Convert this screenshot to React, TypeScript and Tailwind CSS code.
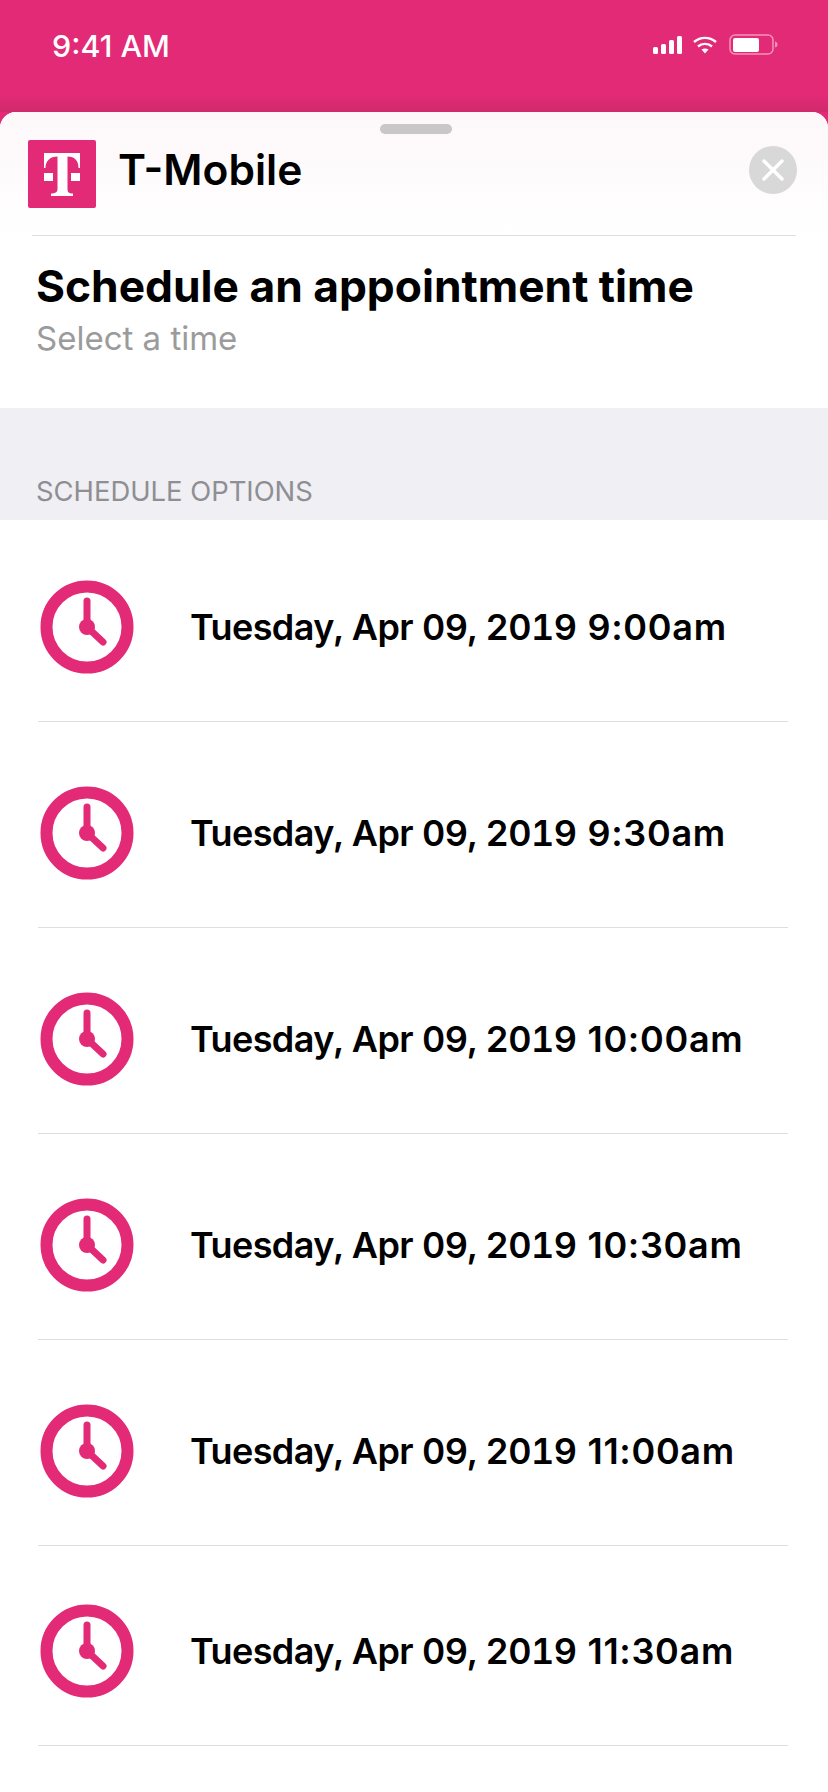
const PINK = "#e32a76";

const SLOTS = [
  { time: "9:00am", row: "h-[202px] pt-[13px]" },
  { time: "9:30am", row: "h-[206px] pt-[16px]" },
  { time: "10:00am", row: "h-[206px] pt-[16px]" },
  { time: "10:30am", row: "h-[206px] pt-[16px]" },
  { time: "11:00am", row: "h-[206px] pt-[16px]" },
  { time: "11:30am", row: "h-[200px] pt-[10px]" },
];

function ClockIcon() {
  return (
    <svg width="94" height="94" viewBox="0 0 94 94" fill="none" className="shrink-0">
      <circle cx="47" cy="47" r="40.500" stroke={PINK} strokeWidth="12" />
      <path d="M47 21V47L63 62" stroke={PINK} strokeWidth="7" strokeLinecap="round" strokeLinejoin="round" />
      <circle cx="47" cy="47" r="8" fill={PINK} />
    </svg>
  );
}

function StatusIcons() {
  return (
    <div className="flex items-center">
      <svg width="30" height="18" viewBox="0 0 30 18" fill="white">
        <rect x="0" y="11" width="5" height="7" rx="1.500" />
        <rect x="8" y="8" width="5" height="10" rx="1.500" />
        <rect x="16" y="4" width="5" height="14" rx="1.500" />
        <rect x="24" y="0" width="5" height="18" rx="1.500" />
      </svg>
      <svg width="24" height="18" viewBox="0 0 24 18" fill="none" className="ml-[10px]">
        <path d="M1 6C7.500 0.500 16.500 0.500 23 6" stroke="white" strokeWidth="2.400" />
        <path d="M5 10.500C9 7 15 7 19 10.500" stroke="white" strokeWidth="2.400" />
        <path d="M8.500 13.500C10.500 12 13.500 12 15.500 13.500L12 17.500Z" fill="white" />
      </svg>
      <svg width="50" height="22" viewBox="0 0 50 22" fill="none" className="ml-[12px]">
        <rect x="1" y="1" width="43" height="19" rx="5" stroke="white" strokeOpacity="0.5" strokeWidth="1.500" />
        <rect x="4" y="4" width="26" height="14" rx="2" fill="white" />
        <path d="M46 7.500C48 8 48.500 9.500 48.500 10.500C48.500 11.500 48 13 46 13.500Z" fill="white" fillOpacity="0.5" />
      </svg>
    </div>
  );
}

export default function App() {
  return (
    <div
      className="w-[828px] h-[1792px] overflow-hidden bg-[#e32a76]"
      style={{ fontFamily: 'Inter, "Liberation Sans", sans-serif' }}
    >
      {/* Status bar */}
      <div className="h-[112px] pt-[28px] pl-[52px] pr-[49px] flex items-start justify-between bg-gradient-to-b from-[#e32a76] from-85% to-[#cf2a6c]">
        <span className="text-[30.500px] leading-[36px] font-medium text-white">9:41 AM</span>
        <div className="pt-[6px]">
          <StatusIcons />
        </div>
      </div>

      {/* Sheet */}
      <div className="relative h-[1680px] bg-white rounded-t-[16px] overflow-hidden">
        <div className="absolute left-[380px] top-[12px] w-[72px] h-[10px] rounded-full bg-[#c9c7c8]" />

        <div className="h-[123px] pl-[28px] pr-[31px] pt-[28px] flex items-start bg-gradient-to-b from-[#fdf7fa] to-white">
          <div className="w-[68px] h-[68px] rounded-[2px] bg-[#e32a76] flex items-center justify-center">
            <svg width="36" height="43" viewBox="0 0 36 43" fill="white">
              <path d="M0 0H36V15H34.500C34.500 8 31 3.500 23.500 3.500V36C23.500 39 24.500 40.500 29 40.500V43H7V40.500C11.500 40.500 13.500 39 13.500 36V3.500C6 3.500 1.500 8 1.500 15H0Z" />
              <rect x="0" y="20" width="9" height="8" />
              <rect x="27" y="20" width="9" height="8" />
            </svg>
          </div>
          <h2 className="ml-[22px] mt-[4px] text-[42.500px] leading-[52px] font-semibold text-black">T-Mobile</h2>
          <div className="ml-auto mt-[6px] w-[48px] h-[48px] rounded-full bg-[#d8d8d8] flex items-center justify-center">
            <svg width="22" height="22" viewBox="0 0 22 22" fill="none">
              <path d="M2 2L20 20M20 2L2 20" stroke="white" strokeWidth="3.500" strokeLinecap="round" />
            </svg>
          </div>
        </div>

        <div className="mx-[32px] h-[1px] bg-[#dedee0]" />

        <div className="h-[172px] pl-[36px] pt-[24px]">
          <h1 className="text-[44.300px] leading-[52px] font-bold text-black whitespace-nowrap">Schedule an appointment time</h1>
          <p className="mt-[6px] text-[33px] leading-[40px] text-[#9b9b9b]">Select a time</p>
        </div>

        {/* Section header */}
        <div className="h-[112px] bg-[#efeff4] pl-[36px] pt-[67px]">
          <p className="text-[27.400px] leading-[32px] text-[#8e8e93]">SCHEDULE OPTIONS</p>
        </div>

        {/* Time slots */}
        {SLOTS.map((slot) => (
          <div key={slot.time} className={`${slot.row} ml-[38px] mr-[40px] border-b border-[#dedee0] flex items-center`}>
            <div className="ml-[2px]">
              <ClockIcon />
            </div>
            <span className="ml-[56px] text-[36px] font-semibold text-black whitespace-nowrap">
              <span className="tabular-nums tracking-[-0.6px]">Tuesday, Apr 09, 2019</span>{" "}
              <span className="ml-[2px] tracking-[0.7px]">{slot.time}</span>
            </span>
          </div>
        ))}
      </div>
    </div>
  );
}
